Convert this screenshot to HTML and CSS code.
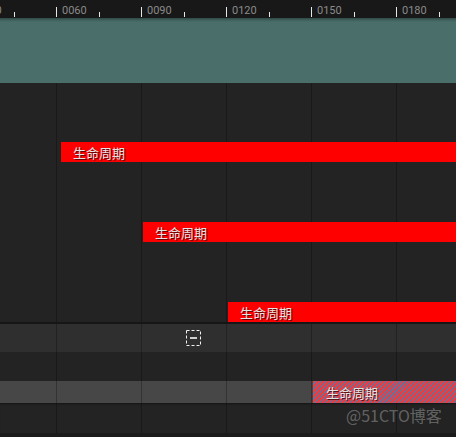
FILE: index.html
```html
<!DOCTYPE html>
<html lang="zh">
<head>
<meta charset="utf-8">
<link rel="stylesheet" href="styles.css">
</head>
<body>
<div class="page">
  <div class="ruler">
    <div class="seg"><i class="major"></i><span class="lbl">0030</span><i class="minor"></i></div>
    <div class="seg"><i class="major"></i><span class="lbl">0060</span><i class="minor"></i></div>
    <div class="seg"><i class="major"></i><span class="lbl">0090</span><i class="minor"></i></div>
    <div class="seg"><i class="major"></i><span class="lbl">0120</span><i class="minor"></i></div>
    <div class="seg"><i class="major"></i><span class="lbl">0150</span><i class="minor"></i></div>
    <div class="seg"><i class="major"></i><span class="lbl">0180</span><i class="minor"></i></div>
  </div>
  <div class="band"></div>
  <div class="tracks grid">
    <div class="bar" style="margin-left:61px"><span>生命周期</span></div>
    <div class="bar" style="margin-left:143px"><span>生命周期</span></div>
    <div class="bar" style="margin-left:228px"><span>生命周期</span></div>
  </div>
  <div class="sep"></div>
  <div class="row row-group grid">
    <svg class="collapse" width="15" height="16" viewBox="0 0 15 16">
      <rect x="0.5" y="0.5" width="14" height="15" fill="none" stroke="#f2f2f2" stroke-width="1" stroke-dasharray="3 2"/>
      <line x1="4" y1="8" x2="11" y2="8" stroke="#cfcfcf" stroke-width="2"/>
    </svg>
  </div>
  <div class="row row-empty grid"></div>
  <div class="row row-sel grid">
    <div class="bar hatched" style="margin-left:313px"><span>生命周期</span></div>
  </div>
  <div class="row row-bottom grid"></div>
  <div class="foot"></div>
  <div class="watermark">@51CTO博客</div>
</div>
</body>
</html>
```
FILE: styles.css
```css
html, body {
  margin: 0;
  padding: 0;
  background: #1c1c1c;
}
.page {
  position: relative;
  width: 456px;
  height: 437px;
  overflow: hidden;
  display: flex;
  flex-direction: column;
  font-family: "Noto Sans CJK SC", "Noto Sans", sans-serif;
}
.ruler {
  height: 18px;
  flex: none;
  background: #181818;
  display: flex;
  margin-left: -29px;
  overflow: visible;
}
.seg {
  width: 85px;
  flex: none;
  display: flex;
  align-items: flex-end;
  height: 18px;
}
.major {
  display: block;
  width: 1px;
  height: 10px;
  margin-bottom: 1px;
  background: #e6e6e6;
}
.minor {
  display: block;
  width: 1px;
  height: 5px;
  margin-bottom: 1px;
  background: #e6e6e6;
}
.lbl {
  width: 37px;
  margin-left: 5px;
  align-self: flex-start;
  margin-top: 4px;
  font-family: Roboto, "Noto Sans", sans-serif;
  font-size: 11px;
  line-height: 13px;
  color: #8a8a8a;
}
.band {
  height: 65px;
  flex: none;
  background: linear-gradient(#2f4a47 0, #3f5f5b 2px, #4a6e6a 4px, #4a6e6a 100%);
}
.grid {
  background-image: linear-gradient(to right, rgba(0, 0, 0, 0.28) 0, rgba(0, 0, 0, 0.28) 1px, transparent 1px);
  background-size: 85px 100%;
  background-position: 56px 0;
  background-repeat: repeat-x;
}
.tracks {
  height: 239px;
  flex: none;
  background-color: #232323;
  display: flex;
  flex-direction: column;
  padding-top: 59px;
  gap: 60px;
  box-sizing: border-box;
}
.bar {
  height: 20px;
  flex: none;
  background: #ff0000;
  display: flex;
  align-items: center;
  padding-left: 12px;
}
.bar span {
  font-size: 13px;
  line-height: 15px;
  color: #e4e4e4;
  text-shadow: 1px 1px 0 rgba(60, 0, 0, 0.75);
  white-space: nowrap;
}
.hatched {
  flex: 1;
  align-self: stretch;
  height: auto;
  padding-left: 13px;
  background: repeating-linear-gradient(135deg, #f23a3a 0, #f23a3a 2px, #6b6f9c 2px, #6b6f9c 3.5px);
}
.sep {
  height: 2px;
  flex: none;
  background: #161616;
}
.row {
  flex: none;
  display: flex;
  align-items: center;
}
.row-group {
  height: 28px;
  background-color: #2f2f2f;
}
.collapse {
  margin-left: 186px;
  margin-top: -1px;
}
.row-empty {
  height: 29px;
  background-color: #232323;
}
.row-sel {
  height: 22px;
  background-color: #474747;
}
.row-bottom {
  height: 30px;
  background-color: #232323;
  box-shadow: inset 0 2px 2px -1px #151515;
}
.foot {
  flex: 1;
  background: #1b1b1b;
}
.watermark {
  position: absolute;
  left: 346px;
  top: 404px;
  font-size: 16px;
  line-height: 22px;
  color: rgba(255, 255, 255, 0.3);
  font-family: "Noto Sans CJK SC", sans-serif;
  white-space: nowrap;
}
```
